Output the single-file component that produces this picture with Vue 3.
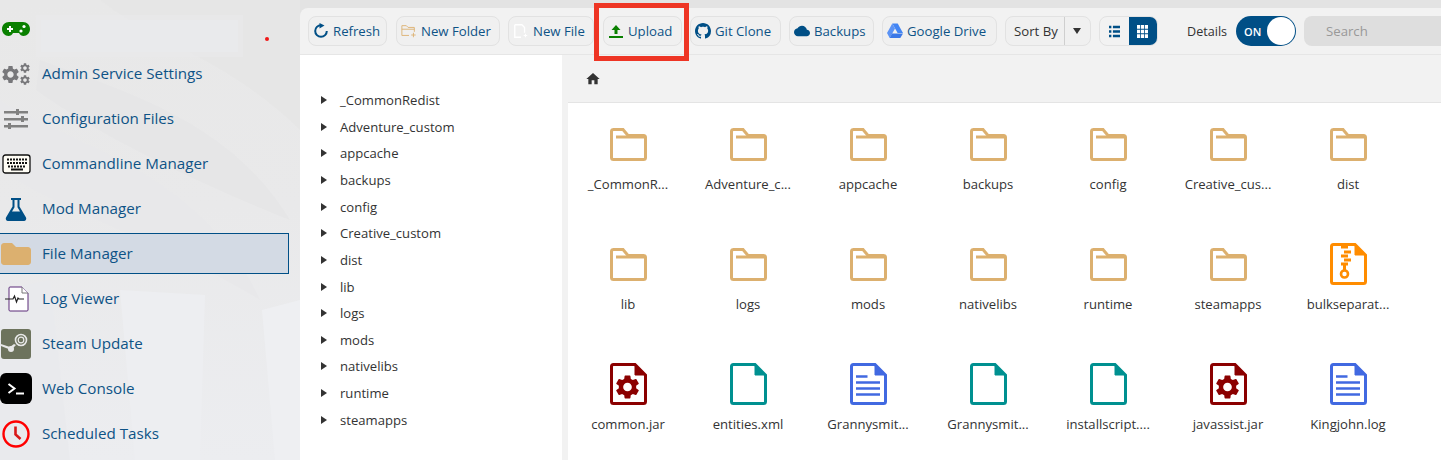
<template>
  <div class="page">
    <!-- hidden sprite for file icons -->
    <svg class="sprite" aria-hidden="true">
      <symbol id="gear" viewBox="0 0 24 24">
        <path d="M19.14 12.94c.04-.3.06-.61.06-.94 0-.32-.02-.64-.07-.94l2.03-1.58c.18-.14.23-.41.12-.61l-1.92-3.32c-.12-.22-.37-.29-.59-.22l-2.39.96c-.5-.38-1.03-.7-1.62-.94l-.36-2.54c-.04-.24-.24-.41-.48-.41h-3.84c-.24 0-.43.17-.47.41l-.36 2.54c-.59.24-1.13.57-1.62.94l-2.39-.96c-.22-.08-.47 0-.59.22L2.74 8.87c-.12.21-.08.47.12.61l2.03 1.58c-.05.3-.09.63-.09.94s.02.64.07.94l-2.03 1.58c-.18.14-.23.41-.12.61l1.92 3.32c.12.22.37.29.59.22l2.39-.96c.5.38 1.03.7 1.62.94l.36 2.54c.05.24.24.41.48.41h3.84c.24 0 .44-.17.47-.41l.36-2.54c.59-.24 1.13-.56 1.62-.94l2.39.96c.22.08.47 0 .59-.22l1.92-3.32c.12-.22.07-.47-.12-.61l-2.01-1.58zM12 15.6c-1.98 0-3.6-1.62-3.6-3.6s1.62-3.6 3.6-3.6 3.6 1.62 3.6 3.6-1.62 3.6-3.6 3.6z" />
      </symbol>
    </svg>

    <aside class="sidebar">
      <svg class="texture" viewBox="0 0 300 460" preserveAspectRatio="none" aria-hidden="true">
        <path d="M100 0 C150 40 230 60 300 130 L300 0 Z" fill="#e6e6e6" />
        <path d="M40 60 C120 90 230 120 290 220 C240 200 120 150 36 90 Z" fill="#e6e6e7" />
        <path d="M0 100 C80 150 200 170 260 300 C180 250 60 210 0 170 Z" fill="#e8e8ea" />
        <path d="M120 290 L205 295 L200 460 L135 460 Z" fill="#edeef1" />
        <path d="M262 310 L300 300 L300 460 L275 460 Z" fill="#eeeff2" />
        <path d="M0 290 L50 280 L70 460 L0 460 Z" fill="#e9eaed" />
      </svg>

      <div class="nav-top">
        <svg class="nav-icon" viewBox="0 0 30 16">
          <path d="M8 1h14c4 0 7 3 7 7s-3 7-6.5 7c-2 0-3.500-1-4.500-3h-6c-1 2-2.500 3-4.500 3C4 15 1 12 1 8s3-7 7-7z" fill="#0a8000" />
          <path d="M6 8h6M9 5v6" stroke="#fff" stroke-width="2" />
          <circle cx="23" cy="5.5" r="1.6" fill="#fff" />
          <circle cx="20" cy="10" r="1.6" fill="#fff" />
        </svg>
        <div class="server-name"></div>
        <span class="status-dot"></span>
      </div>

      <div v-for="item in navItems" :key="item.label" :class="['nav-item', { active: item.active }]">
        <span class="nav-icon-box">
          <svg v-if="item.icon === 'gears'" class="nav-icon" viewBox="0 0 30 24">
            <use href="#gear" x="-1" y="2" width="21" height="21" fill="#77777a" />
            <use href="#gear" x="18" y="0" width="12" height="12" fill="#77777a" />
            <use href="#gear" x="18" y="12" width="12" height="12" fill="#77777a" />
          </svg>
          <svg v-else-if="item.icon === 'sliders'" class="nav-icon" viewBox="0 0 30 24">
            <g fill="#808080">
              <rect x="3" y="4" width="24" height="2.5" />
              <rect x="3" y="11" width="24" height="2.5" />
              <rect x="3" y="18" width="24" height="2.5" />
              <rect x="15" y="2" width="3" height="6" />
              <rect x="20" y="9" width="3" height="6" />
              <rect x="7" y="16" width="3" height="6" />
            </g>
          </svg>
          <svg v-else-if="item.icon === 'keyboard'" class="nav-icon" viewBox="0 0 30 22">
            <rect x="2" y="2" width="27" height="18" rx="2.5" fill="#fffdf5" stroke="#111" stroke-width="1.3" />
            <path d="M6 6.500h20M6 10h20M7 13.500h18" stroke="#111" stroke-width="2.2" stroke-dasharray="2 1" />
            <rect x="10" y="15.500" width="12" height="2" fill="#111" />
          </svg>
          <svg v-else-if="item.icon === 'flask'" class="nav-icon" viewBox="0 0 30 24">
            <path d="M10 1h10v2h-1.500v6.500L25 20.500c.8 1.500-.2 3.500-2 3.500H7c-1.800 0-2.800-2-2-3.500L11.500 9.500V3H10z" fill="#004f86" />
            <path d="M13.500 3v7.200L11 14.500h8l-2.500-4.300V3z" fill="#e9eaec" />
          </svg>
          <svg v-else-if="item.icon === 'folder'" class="nav-icon" viewBox="0 0 30 22">
            <path d="M3 0h8l4 4h12c1.600 0 3 1.400 3 3v12c0 1.600-1.400 3-3 3H3c-1.600 0-3-1.400-3-3V3C0 1.400 1.400 0 3 0z" fill="#dcb06f" />
          </svg>
          <svg v-else-if="item.icon === 'log'" class="nav-icon" viewBox="0 0 30 26">
            <path d="M9 1h12l6 6v17c0 .6-.4 1-1 1H9c-.6 0-1-.4-1-1V2c0-.6.4-1 1-1z" fill="#fff" stroke="#5a2a78" stroke-width="1" />
            <path d="M21 1v6h6" fill="#fff" stroke="#777" stroke-width="1" />
            <path d="M4 13h8l1.500-3 2 6 1.500-4 1 1h5" fill="none" stroke="#222" stroke-width="1.2" />
          </svg>
          <svg v-else-if="item.icon === 'steam'" class="nav-icon steam" viewBox="0 0 30 30">
            <rect x="0" y="0" width="30" height="30" rx="3" fill="#6d735d" />
            <circle cx="20" cy="11" r="5.5" fill="none" stroke="#e8e8e8" stroke-width="1.6" />
            <circle cx="20" cy="11" r="2.8" fill="#6d735d" stroke="#e8e8e8" stroke-width="1.2" />
            <path d="M0 17l10 4 5-5-2-1-4 3-9-3z" fill="#e8e8e8" />
            <circle cx="10" cy="20" r="3" fill="#e8e8e8" />
          </svg>
          <svg v-else-if="item.icon === 'console'" class="nav-icon console" viewBox="0 0 32 31">
            <rect x="0" y="0" width="32" height="31" rx="6" fill="#000" />
            <path d="M8.500 11l6 4.500-6 4.500" fill="none" stroke="#fff" stroke-width="2" />
            <path d="M16 20.500h8" stroke="#fff" stroke-width="2" />
          </svg>
          <svg v-else-if="item.icon === 'clock'" class="nav-icon" viewBox="0 0 30 28">
            <circle cx="15" cy="14" r="12.5" fill="none" stroke="#f00" stroke-width="2.4" />
            <path d="M14.500 6.500v8l5 4.500" fill="none" stroke="#d81818" stroke-width="2.6" />
          </svg>
        </span>
        <span class="nav-label">{{ item.label }}</span>
      </div>
    </aside>

    <main class="panel">
      <div class="toolbar">
        <button class="tool-btn btn-refresh">
          <svg class="btn-icon" viewBox="0 0 16 16">
            <path d="M13.800 8A5.800 5.800 0 1 1 8 2.200" fill="none" stroke="#004f86" stroke-width="2" />
            <path d="M6.500 0l5 2.600-5 2.900z" fill="#004f86" />
          </svg>
          Refresh
        </button>
        <button class="tool-btn btn-folder">
          <svg class="btn-icon" viewBox="0 0 18 16">
            <path d="M1 13V2h5l2 2h7v5M1 13h8" fill="none" stroke="#dcb06f" stroke-width="1" />
            <path d="M1 6h14" stroke="#dcb06f" stroke-width="1" />
            <path d="M14 10v5M11.500 12.500h5" stroke="#dcb06f" stroke-width="1" />
          </svg>
          New Folder
        </button>
        <button class="tool-btn btn-file">
          <svg class="btn-icon" viewBox="0 0 18 16">
            <path d="M2 1h8l3 3v6M2 1v14h7" fill="none" stroke="#fff" stroke-width="1.5" />
            <path d="M14 11v4M12 13h4" stroke="#fff" stroke-width="1.2" />
          </svg>
          New File
        </button>
        <button class="tool-btn btn-upload">
          <svg class="btn-icon" viewBox="0 0 16 16">
            <path d="M8 2l4.500 5H9.500v4h-3V7H3.500z" fill="#0a8000" />
            <rect x="1" y="13" width="14" height="2" fill="#0a8000" />
          </svg>
          Upload
        </button>
        <button class="tool-btn btn-git">
          <svg class="btn-icon" viewBox="0 0 16 16">
            <path fill="#004f86" d="M8 0C3.580 0 0 3.580 0 8c0 3.540 2.290 6.530 5.470 7.590.4.070.55-.17.55-.38 0-.19-.01-.82-.01-1.490-2.010.37-2.530-.49-2.690-.94-.09-.23-.48-.94-.82-1.130-.28-.15-.68-.52-.01-.53.63-.01 1.080.58 1.230.82.72 1.210 1.870.87 2.330.66.07-.52.28-.87.51-1.070-1.780-.2-3.640-.89-3.640-3.950 0-.87.31-1.590.82-2.150-.08-.2-.36-1.020.08-2.120 0 0 .67-.21 2.200.82.64-.18 1.320-.27 2-.27.68 0 1.360.09 2 .27 1.530-1.040 2.200-.82 2.200-.82.44 1.100.16 1.920.08 2.120.51.56.82 1.270.82 2.150 0 3.070-1.870 3.750-3.650 3.950.29.25.54.73.54 1.480 0 1.070-.01 1.930-.01 2.200 0 .21.15.46.55.38A8.013 8.013 0 0016 8c0-4.420-3.580-8-8-8z" />
          </svg>
          Git Clone
        </button>
        <button class="tool-btn btn-backups">
          <svg class="btn-icon" viewBox="0 0 24 24">
            <path fill="#004f86" d="M19.350 10.040C18.670 6.590 15.640 4 12 4 9.110 4 6.600 5.640 5.350 8.040 2.340 8.360 0 10.910 0 14c0 3.310 2.690 6 6 6h13c2.760 0 5-2.240 5-5 0-2.640-2.050-4.780-4.650-4.960z" />
          </svg>
          Backups
        </button>
        <button class="tool-btn btn-drive">
          <svg class="btn-icon" viewBox="0 0 16 15">
            <path d="M5.300 0h5.400l5.300 9.500h-5.400z" fill="#4285f4" />
            <path d="M5.300 0L8 4.900 2.700 14.500 0 9.500z" fill="#5b93f5" />
            <path d="M5 10h11l-2.700 4.500H2.700z" fill="#3b78e7" />
          </svg>
          Google Drive
        </button>
        <div class="sort-group">
          <span class="sort-label">Sort By</span>
          <span class="sort-caret"></span>
        </div>
        <div class="view-group">
          <span class="view-btn">
            <svg class="view-icon" viewBox="0 0 14 13" preserveAspectRatio="none">
              <path d="M0 2h3M5 2h9M0 6.500h3M5 6.500h9M0 11h3M5 11h9" stroke="#004f86" stroke-width="2.6" />
            </svg>
          </span>
          <span class="view-btn on">
            <svg class="view-icon" viewBox="0 0 14 14" preserveAspectRatio="none">
              <path d="M0 0h4v4H0zM5 0h4v4H5zM10 0h4v4h-4zM0 5h4v4H0zM5 5h4v4H5zM10 5h4v4h-4zM0 10h4v4H0zM5 10h4v4H5zM10 10h4v4h-4z" fill="#fff" />
            </svg>
          </span>
        </div>
        <span class="details-label">Details</span>
        <div class="switch">
          <span class="switch-text">ON</span>
          <span class="switch-knob"></span>
        </div>
        <input class="search" type="text" placeholder="Search" />
      </div>

      <div class="body">
        <div class="tree">
          <div v-for="name in folders" :key="name" class="tree-row">
            <span class="tree-arrow"></span>
            <span>{{ name }}</span>
          </div>
        </div>
        <div class="content">
          <div class="breadcrumb">
            <svg class="home" viewBox="0 0 24 24">
              <path fill="#333" d="M10 20v-6h4v6h5v-8h3L12 3 2 12h3v8z" />
            </svg>
          </div>
          <div class="grid">
            <div v-for="(file, i) in files" :key="i" class="grid-item">
              <div class="file-icon">
                <svg v-if="file.type === 'folder'" class="folder-svg" viewBox="0 0 37 33">
                  <path d="M3 1.500h10l5 6h15.500c1.200 0 2 .8 2 2v20c0 1.200-.8 2-2 2h-30c-1.200 0-2-.8-2-2v-26c0-1.200 .8-2 2-2z" fill="none" stroke="#dcb06f" stroke-width="3" />
                  <path d="M6 9h29" stroke="#dcb06f" stroke-width="3" />
                </svg>
                <svg v-else class="file-svg" viewBox="0 0 37 42" :style="{ color: colors[file.type] }">
                  <path d="M3.500 1.500H25L35.500 12v26.500c0 1.100-.9 2-2 2h-30c-1.100 0-2-.9-2-2v-35c0-1.100.9-2 2-2z" fill="#fff" stroke="currentColor" stroke-width="3" />
                  <path d="M25 1.500L35.500 12H25z" fill="currentColor" stroke="currentColor" stroke-width="1" />
                  <use v-if="file.type === 'jar'" href="#gear" x="3" y="9.500" width="29" height="29" fill="currentColor" />
                  <path v-if="file.type === 'doc'" d="M6 13.500h11.500M6 19.500h24M6 25.500h24M6 31.500h24" stroke="currentColor" stroke-width="2.600" />
                  <path v-if="file.type === 'zip'" d="M11 4h7M14 9h7M11 13h7M14 17h7M11 21h7" stroke="currentColor" stroke-width="3" />
                  <circle v-if="file.type === 'zip'" cx="14.5" cy="31" r="3.5" fill="none" stroke="currentColor" stroke-width="2.6" />
                  <path v-if="file.type === 'zip'" d="M14.500 21v6" stroke="currentColor" stroke-width="3" />
                </svg>
              </div>
              <div class="file-name">{{ file.name }}</div>
            </div>
          </div>
        </div>
      </div>

      <div class="highlight"></div>
    </main>
  </div>
</template>

<script setup>
const navItems = [
  { label: 'Admin Service Settings', icon: 'gears' },
  { label: 'Configuration Files', icon: 'sliders' },
  { label: 'Commandline Manager', icon: 'keyboard' },
  { label: 'Mod Manager', icon: 'flask' },
  { label: 'File Manager', icon: 'folder', active: true },
  { label: 'Log Viewer', icon: 'log' },
  { label: 'Steam Update', icon: 'steam' },
  { label: 'Web Console', icon: 'console' },
  { label: 'Scheduled Tasks', icon: 'clock' }
]

const folders = [
  '_CommonRedist',
  'Adventure_custom',
  'appcache',
  'backups',
  'config',
  'Creative_custom',
  'dist',
  'lib',
  'logs',
  'mods',
  'nativelibs',
  'runtime',
  'steamapps'
]

const colors = {
  jar: '#8b0000',
  plain: '#009090',
  doc: '#4169e1',
  zip: '#ff8c00'
}

const files = [
  { name: '_CommonR...', type: 'folder' },
  { name: 'Adventure_c...', type: 'folder' },
  { name: 'appcache', type: 'folder' },
  { name: 'backups', type: 'folder' },
  { name: 'config', type: 'folder' },
  { name: 'Creative_cus...', type: 'folder' },
  { name: 'dist', type: 'folder' },
  { name: 'lib', type: 'folder' },
  { name: 'logs', type: 'folder' },
  { name: 'mods', type: 'folder' },
  { name: 'nativelibs', type: 'folder' },
  { name: 'runtime', type: 'folder' },
  { name: 'steamapps', type: 'folder' },
  { name: 'bulkseparat...', type: 'zip' },
  { name: 'common.jar', type: 'jar' },
  { name: 'entities.xml', type: 'plain' },
  { name: 'Grannysmit...', type: 'doc' },
  { name: 'Grannysmit...', type: 'plain' },
  { name: 'installscript....', type: 'plain' },
  { name: 'javassist.jar', type: 'jar' },
  { name: 'Kingjohn.log', type: 'doc' }
]
</script>

<style>
html,
body {
  margin: 0;
  background: #e8e8e8;
}
</style>

<style scoped>
.page {
  display: flex;
  width: 1441px;
  height: 460px;
  overflow: hidden;
  position: relative;
  background: #e3e3e3;
  font-family: "Open Sans", "Noto Sans", sans-serif;
}

.sprite {
  position: absolute;
  width: 0;
  height: 0;
}

.sidebar {
  position: relative;
  flex: 0 0 300px;
  padding-top: 8px;
  box-sizing: border-box;
  background: linear-gradient(180deg, #e8e8e8 0%, #e9e9ea 45%, #ecedf0 100%);
}

.texture {
  position: absolute;
  top: 0;
  left: 0;
  width: 300px;
  height: 460px;
}

.nav-top,
.nav-item {
  position: relative;
  display: flex;
  align-items: center;
  height: 41px;
  margin-bottom: 4px;
  box-sizing: border-box;
}

.nav-top .nav-icon {
  width: 30px;
  height: 16px;
  margin-left: 1px;
}

.server-name {
  width: 197px;
  height: 32px;
  margin: 14px 0 0 10px;
  background: #e9eaec;
  box-shadow: 0 0 0 5px rgba(236, 236, 238, 0.35);
}

.status-dot {
  width: 4px;
  height: 4px;
  margin: 20px 0 0 27px;
  border-radius: 50%;
  background: #f01818;
}

.nav-item {
  margin-left: -1px;
  width: 290px;
  border: 1px solid transparent;
  color: #0e5386;
  font-size: 15.2px;
}

.nav-item.active {
  background: #d3dae4;
  border-color: #004f86;
}

.nav-label {
  margin-top: -2px;
}

.nav-icon-box {
  display: flex;
  justify-content: center;
  align-items: center;
  flex: 0 0 32px;
  margin-right: 10px;
}

.nav-icon {
  display: block;
  width: 30px;
  height: 28px;
}

.nav-icon.steam {
  height: 30px;
}

.nav-icon.console {
  width: 32px;
  height: 31px;
}

.panel {
  position: relative;
  flex: 1;
  min-width: 0;
  margin-top: 8px;
  background: #f2f2f2;
  border-top-left-radius: 8px;
}

.toolbar {
  display: flex;
  align-items: center;
  gap: 8px;
  height: 47px;
  padding: 8px 0 8px 8px;
  box-sizing: border-box;
  border-bottom: 1px solid #e6e6e6;
  overflow: hidden;
}

.tool-btn {
  display: flex;
  align-items: center;
  flex: none;
  gap: 4px;
  height: 30px;
  padding: 0 0 0 4px;
  border: 1px solid #e2e2e2;
  border-radius: 8px;
  background: #f0f0f0;
  color: #0e5386;
  font-family: inherit;
  font-size: 13.2px;
  white-space: nowrap;
}

.btn-refresh {
  width: 79px;
}

.btn-folder {
  width: 104px;
  margin-left: 1px;
}

.btn-file {
  width: 86px;
}

.btn-upload {
  width: 79px;
  margin-left: 1px;
}

.btn-git {
  width: 91px;
}

.btn-backups {
  width: 85px;
}

.btn-drive {
  width: 115px;
}

.btn-icon {
  flex: none;
  width: 16px;
  height: 16px;
}

.sort-group {
  display: flex;
  align-items: stretch;
  flex: none;
  width: 86px;
  height: 30px;
  box-sizing: border-box;
  border: 1px solid #e2e2e2;
  border-radius: 8px;
  background: #f0f0f0;
  color: #333;
  font-size: 13.2px;
}

.sort-label {
  display: flex;
  align-items: center;
  width: 59px;
  box-sizing: border-box;
  padding-left: 8px;
  border-right: 1px solid #cfcfcf;
}

.sort-caret {
  position: relative;
  flex: 1;
}

.sort-caret::after {
  content: '';
  position: absolute;
  top: 11px;
  left: 8px;
  border-left: 4.5px solid transparent;
  border-right: 4.5px solid transparent;
  border-top: 6px solid #333;
}

.view-group {
  display: flex;
  flex: none;
  width: 59px;
  height: 30px;
  box-sizing: border-box;
  border: 1px solid #e2e2e2;
  border-radius: 8px;
  overflow: hidden;
}

.view-btn {
  display: flex;
  align-items: center;
  justify-content: center;
  flex: 1;
}

.view-btn.on {
  background: #004f86;
}

.view-icon {
  width: 11px;
  height: 13px;
}

.details-label {
  flex: none;
  width: 41px;
  margin-left: 21px;
  color: #333;
  font-size: 12.6px;
}

.switch {
  display: flex;
  align-items: center;
  justify-content: space-between;
  flex: none;
  width: 60px;
  height: 30px;
  box-sizing: border-box;
  border-radius: 15px;
  background: #004f86;
}

.switch-text {
  margin-left: 8px;
  color: #fff;
  font-size: 11px;
  font-weight: 600;
}

.switch-knob {
  width: 28px;
  height: 28px;
  margin-right: 1px;
  border-radius: 50%;
  background: #fff;
}

.search {
  flex: none;
  width: 180px;
  height: 30px;
  box-sizing: border-box;
  padding-left: 22px;
  border: none;
  outline: none;
  border-radius: 8px 0 0 8px;
  background: #dedede;
  font-family: inherit;
  font-size: 13.2px;
}

.search::placeholder {
  color: #999;
}

.body {
  display: flex;
  height: 405px;
}

.tree {
  flex: 0 0 262px;
  box-sizing: border-box;
  padding-top: 31.6px;
  background: #fff;
  color: #333;
  font-size: 13.1px;
}

.tree-row {
  display: flex;
  align-items: center;
  height: 26.67px;
  padding-left: 21px;
}

.tree-arrow {
  width: 0;
  height: 0;
  margin-right: 13px;
  border-top: 4px solid transparent;
  border-bottom: 4px solid transparent;
  border-left: 6px solid #333;
}

.content {
  flex: 1;
  min-width: 0;
  margin-left: 6px;
}

.breadcrumb {
  display: flex;
  align-items: center;
  height: 48px;
  box-sizing: border-box;
  padding-left: 17px;
  border-bottom: 1px solid #e4e4e4;
}

.home {
  width: 16px;
  height: 16px;
}

.grid {
  display: grid;
  grid-template-columns: repeat(7, 120px);
  grid-auto-rows: 120px;
  height: 357px;
  background: #fff;
}

.grid-item {
  display: flex;
  flex-direction: column;
  align-items: center;
  padding-top: 20px;
  box-sizing: border-box;
}

.file-icon {
  display: flex;
  align-items: center;
  justify-content: center;
  height: 42px;
}

.folder-svg {
  width: 37px;
  height: 33px;
}

.file-svg {
  width: 37px;
  height: 42px;
}

.file-name {
  margin-top: 10px;
  color: #333;
  font-size: 13.1px;
  white-space: nowrap;
}

.highlight {
  position: absolute;
  top: -5px;
  left: 294px;
  width: 95px;
  height: 58px;
  box-sizing: border-box;
  border: 5px solid #ee3524;
  pointer-events: none;
}
</style>
